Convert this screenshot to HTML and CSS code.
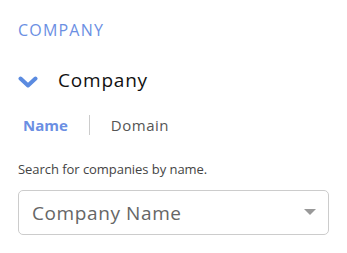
FILE: index.html
```html
<!DOCTYPE html>
<html lang="en">
<head>
	<meta charset="UTF-8">
<link rel="stylesheet" href="styles.css">
</head>
<body>
<div class="panel">
	<div class="section-title">COMPANY</div>
	<div class="group-head">
		<svg class="chev" width="20" height="12" viewBox="0 0 20 12"><path d="M2.5 2.5 L10 9.5 L17.5 2.5" fill="none" stroke="#5b8be0" stroke-width="4" stroke-linecap="round" stroke-linejoin="round"/></svg>
		<span class="group-name">Company</span>
	</div>
	<div class="tabs">
		<span class="tab active">Name</span>
		<span class="sep"></span>
		<span class="tab">Domain</span>
	</div>
	<div class="hint">Search for companies by name.</div>
	<div class="select">
		<span class="placeholder">Company Name</span>
		<span class="caret"></span>
	</div>
</div>
</body>
</html>
```
FILE: styles.css
```css
*{ margin:0; padding:0; box-sizing:border-box;}
body{ font-family:"Open Sans","Lato",sans-serif; background:#fff; color:#222;}
.panel{ padding:20px 18px 0 18px; width:347px;}
.section-title{ font-size:16px; letter-spacing:1.2px; color:#6b8fe3; line-height:20px;}
.group-head{ display:flex; align-items:center; margin-top:28px; height:24px;}
.chev{ margin-right:20px; margin-top:3px;}
.group-name{ font-size:19px; letter-spacing:0.8px; color:#111;}
.tabs{ display:flex; align-items:center; margin-top:23px; padding-left:5px; height:20px;}
.tab{ font-size:15px; letter-spacing:0.5px; color:#555;}
.tab.active{ color:#6b8fe3; font-weight:bold; letter-spacing:0;}
.sep{ width:1px; height:20px; background:#ccc; margin:0 21px;}
.hint{ font-size:13px; letter-spacing:-0.05px; color:#444; margin-top:26px; line-height:16px;}
.select{ margin-top:13px; height:45px; border:1px solid #ccc; border-radius:5px; display:flex; align-items:center; justify-content:space-between; padding:0 12px 0 13px;}
.placeholder{ font-size:19px; letter-spacing:0.6px; color:#666;}
.caret{ width:0; height:0; border-left:6.5px solid transparent; border-right:6.5px solid transparent; border-top:6px solid #999; margin-top:-1px;}
```
